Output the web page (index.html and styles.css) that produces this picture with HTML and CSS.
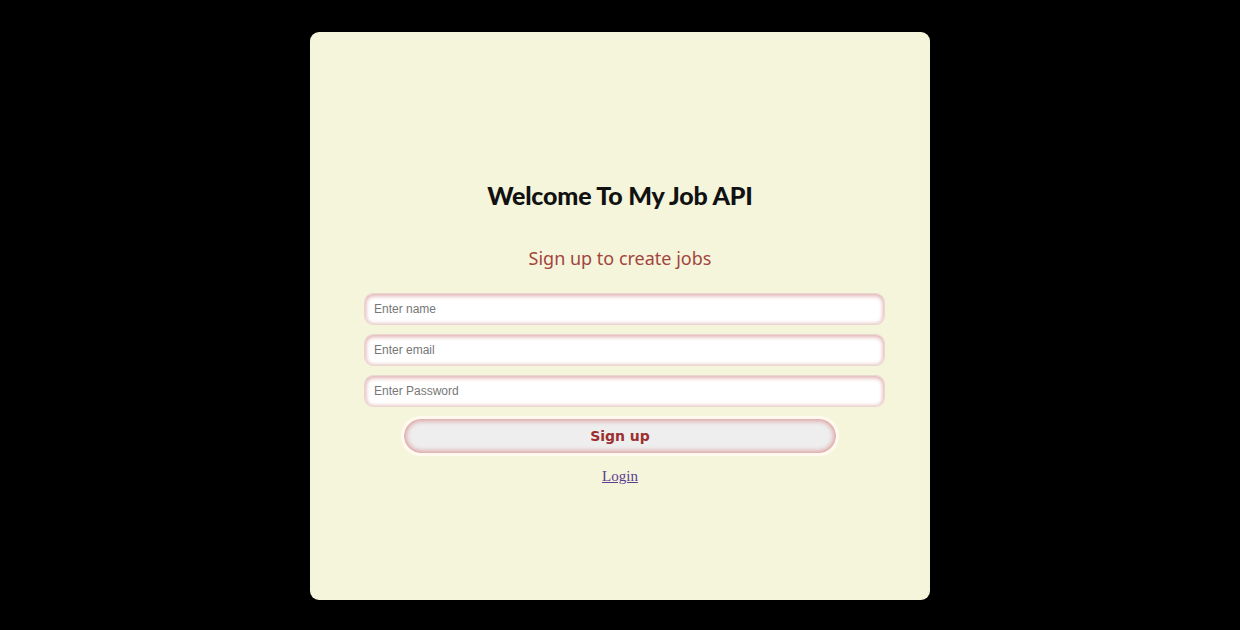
FILE: index.html
```html
<!DOCTYPE html>
<html>
<head>
<meta charset="utf-8">
<link rel="stylesheet" href="styles.css">
</head>
<body>
<div class="card">
  <h1 class="title">Welcome To My Job API</h1>
  <h2 class="subtitle">Sign up to create jobs</h2>
  <form class="form">
    <input class="field" type="text" placeholder="Enter name">
    <input class="field" type="email" placeholder="Enter email">
    <input class="field" type="password" placeholder="Enter Password">
    <button class="btn" type="button">Sign up</button>
  </form>
  <a class="login" href="#">Login</a>
</div>
</body>
</html>
```

FILE: styles.css
```css
html, body {
  margin: 0;
  padding: 0;
  background: #000;
  height: 100%;
}
body {
  display: flex;
  justify-content: center;
  padding-top: 32px;
  box-sizing: border-box;
}
.card {
  width: 620px;
  height: 568px;
  background: #f5f5dc;
  border-radius: 9px;
  display: flex;
  flex-direction: column;
  align-items: center;
  padding-top: 149px;
  box-sizing: border-box;
}
.title {
  margin: 0;
  font-family: "Lato", "Open Sans", sans-serif;
  font-weight: 900;
  font-size: 25px;
  line-height: 28px;
  color: #111;
  letter-spacing: -0.2px;
}
.subtitle {
  margin: 36px 0 0;
  font-family: "Noto Sans", sans-serif;
  font-weight: 400;
  font-size: 18px;
  line-height: 26px;
  color: #a3453c;
}
.form {
  margin-top: 22px;
  padding-left: 9px;
  display: flex;
  flex-direction: column;
  align-items: center;
  gap: 9px;
}
.field {
  width: 521px;
  height: 32px;
  box-sizing: border-box;
  border: 1px solid #ead6d0;
  border-radius: 9px;
  background: #fff;
  box-shadow: inset 0 1px 4px 1px #e0aeae;
  padding: 0 9px;
  font-family: "Liberation Sans", Arial, sans-serif;
  font-size: 12px;
  color: #333;
  outline: none;
}
.field::placeholder {
  color: #777;
}
.btn {
  margin-left: -9px;
  width: 438px;
  height: 40px;
  box-sizing: border-box;
  border: 3px solid #fffaed;
  border-radius: 20px;
  background: #eeeeee;
  box-shadow: inset 0 0 5px 2px #dc9e9e;
  font-family: "DejaVu Sans", Verdana, sans-serif;
  font-weight: bold;
  font-size: 14px;
  color: #9c2f2f;
  cursor: pointer;
}
.login {
  margin-top: 12px;
  font-family: "Liberation Serif", "Times New Roman", serif;
  font-size: 15px;
  color: #5b3e8f;
  text-decoration: underline;
}
```
